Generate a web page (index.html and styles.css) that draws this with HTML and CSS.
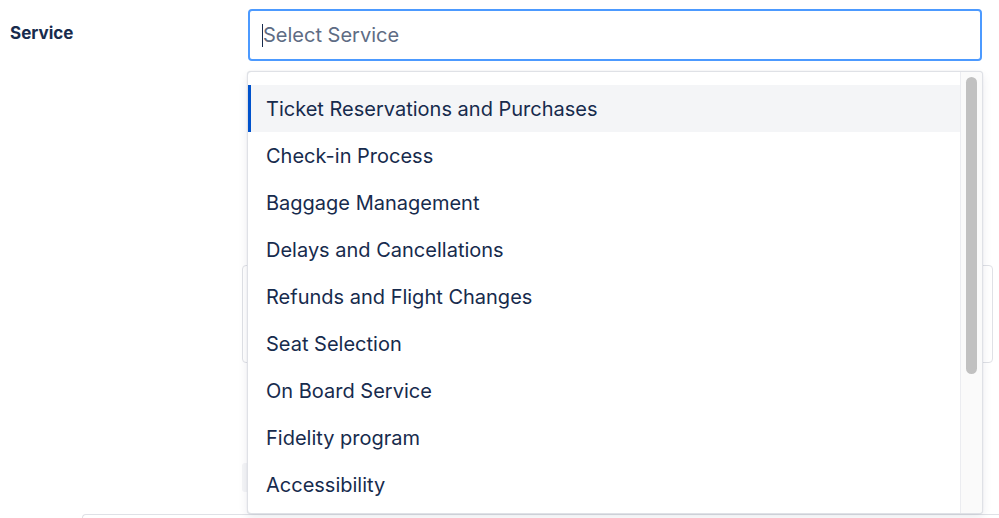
FILE: index.html
```html
<!DOCTYPE html>
<html lang="en">
<head>
<meta charset="utf-8">
<title>Service</title>
<link rel="stylesheet" href="styles.css">
</head>
<body>
<div class="page">
  <div class="form-row">
    <label class="label">Service</label>
    <div class="field">
      <div class="select-input"><span class="caret"></span><span class="placeholder">Select Service</span></div>
      <div class="menu">
        <ul class="options">
          <li class="option selected">Ticket Reservations and Purchases</li>
          <li class="option">Check-in Process</li>
          <li class="option">Baggage Management</li>
          <li class="option">Delays and Cancellations</li>
          <li class="option">Refunds and Flight Changes</li>
          <li class="option">Seat Selection</li>
          <li class="option">On Board Service</li>
          <li class="option">Fidelity program</li>
          <li class="option">Accessibility</li>
        </ul>
        <div class="scrollbar"><div class="thumb"></div></div>
      </div>
    </div>
  </div>
  <div class="behind">
    <div class="textarea-box"></div>
    <div class="ghost-button"></div>
  </div>
  <div class="footer-line"></div>
</div>
</body>
</html>
```

FILE: styles.css
```css
* { box-sizing: border-box; }
html, body { margin: 0; padding: 0; background: #fff; }
body { font-family: Inter, "Noto Sans", Roboto, sans-serif; color: #172b4d; overflow: hidden; }
.page { position: relative; width: 999px; height: 518px; }
.form-row { display: grid; grid-template-columns: 238px 734px; padding: 9px 0 0 10px; }
.label { font-size: 17px; font-weight: 700; padding-top: 14px; color: #172b4d; }
.field { position: relative; }
.select-input {
  height: 52px; border: 2px solid #4c9aff; border-radius: 4px; background: #fff;
  display: flex; align-items: center; padding-left: 12px;
}
.caret { width: 1px; height: 23px; background: #172b4d; }
.placeholder { font-size: 20px; color: #5e6c84; }
.menu {
  position: absolute; z-index: 5; left: -1px; top: 62px; width: 736px; height: 443px;
  background: #fff; border: 1px solid #dfe1e6; border-radius: 4px;
  box-shadow: 0 4px 10px rgba(9,30,66,0.08), 0 0 1px rgba(9,30,66,0.2);
  display: flex; overflow: hidden;
}
.options { list-style: none; margin: 0; padding: 13px 0 0; flex: 1; overflow: hidden; }
.option {
  height: 47px; display: flex; align-items: center; padding-left: 15px; flex-shrink: 0;
  font-size: 20px; color: #172b4d; border-left: 3px solid transparent;
}
.option.selected { background: #f4f5f7; border-left-color: #0052cc; }
.scrollbar { width: 22px; border-left: 1px solid #ebecf0; padding: 5px 4px 0 5px; background: #fafafa; }
.thumb { width: 11px; height: 297px; background: #c1c1c1; border-radius: 6px; }
.behind { display: flex; flex-direction: column; padding: 204px 6px 0 242px; gap: 100px; }
.textarea-box { height: 98px; border: 1px solid #dfe1e6; border-radius: 4px; }
.ghost-button { width: 60px; height: 29px; background: #f4f5f7; border-radius: 3px; }
.footer-line { position: absolute; left: 82px; right: 0; top: 514px; height: 4px; border-top: 1px solid #dfe1e6; border-left: 1px solid #dfe1e6; border-radius: 4px 0 0 0; }
```
